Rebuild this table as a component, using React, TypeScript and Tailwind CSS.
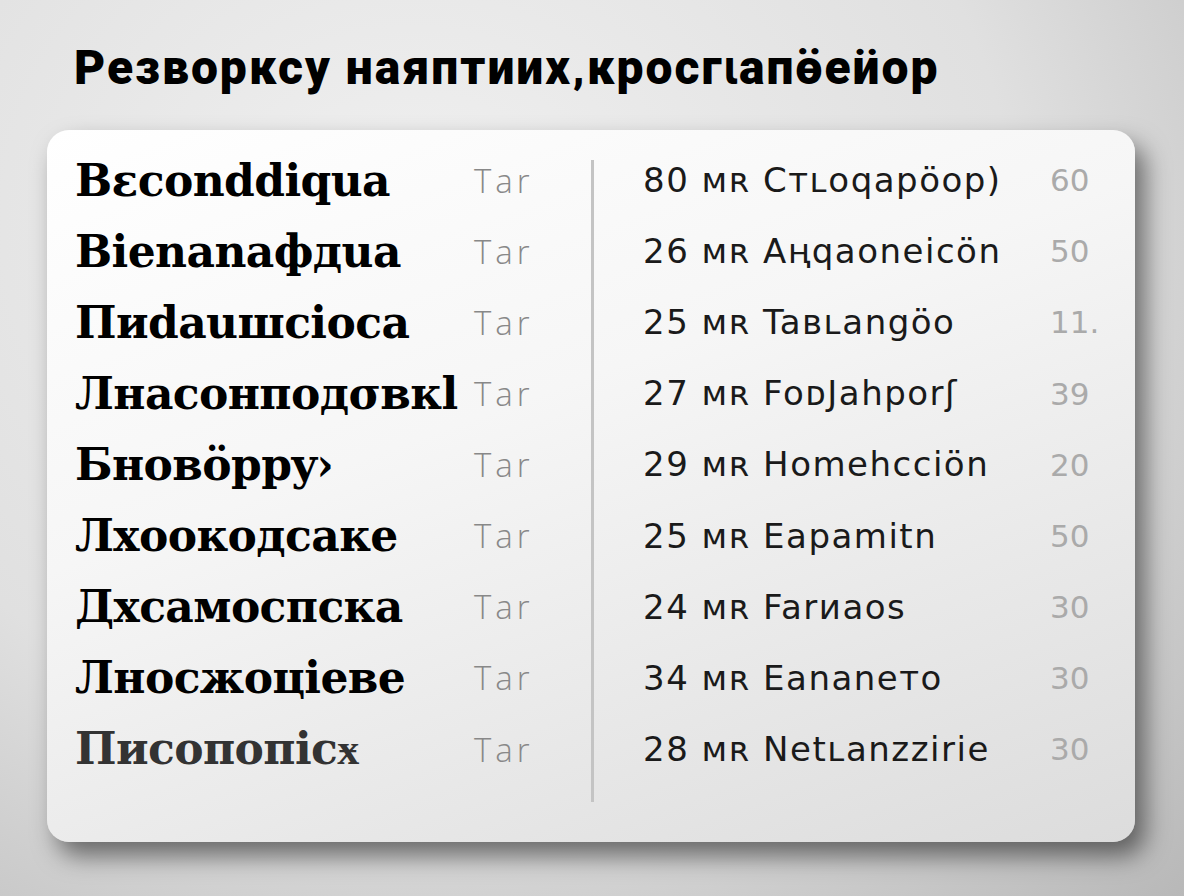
const rows = [
    { name: 'Bεconddiqua', num: '80', item: 'Cтʟoqapöop)', score: '60' },
    { name: 'Bienanaфдua', num: '26', item: 'Aңqaoneicön', score: '50' },
    { name: 'Пиdauшcioca', num: '25', item: 'Taвʟangöo', score: '11.' },
    { name: 'Лнасонподσвкl', num: '27', item: 'FoᴅJahporʃ', score: '39' },
    { name: 'Бновöppy›', num: '29', item: 'Homehcᴄiön', score: '20' },
    { name: 'Лхоокодсаке', num: '25', item: 'Eapamitn', score: '50' },
    { name: 'Дхсамоспска', num: '24', item: 'Farиaos', score: '30' },
    { name: 'Лносжоцiеве', num: '34', item: 'Eananeто', score: '30' },
    { name: 'Писопoпiсӿ', num: '28', item: 'Netʟanzzirie', score: '30' },
];

const App = () => {
    return (
        <div className="w-[1184px] h-[896px] overflow-hidden bg-[radial-gradient(ellipse_at_35%_25%,#f0f0f0_0%,#e0e0e0_55%,#b8b8b8_100%)] flex flex-col">
            {/* Title */}
            <h1 className="pl-[74px] pt-[38px] h-[130px] text-[48px] leading-[60px] font-black text-black tracking-[2px] font-['Roboto',Arial,sans-serif]">
                Резворксу наяптиих‚кросгɩапӫеӥор
            </h1>

            {/* Card */}
            <div className="ml-[47px] w-[1088px] h-[712px] rounded-[22px] bg-[linear-gradient(160deg,#ffffff_0%,#f6f6f6_40%,#dcdcdc_100%)] shadow-[10px_14px_24px_rgba(0,0,0,0.5)] flex">
                <div className="w-[544px] pl-[28px] pt-[15px] flex flex-col">
                    {rows.map((row, i) => (
                        <div key={i} className="h-[71.1px] flex items-center">
                            <span
                                className={`w-[399px] shrink-0 text-[44px] font-bold font-['DejaVu_Serif','Liberation_Serif',serif] tracking-[-0.6px] whitespace-nowrap ${i === 8 ? 'text-[#333]' : 'text-black'}`}
                            >
                                {row.name}
                            </span>
                            <span className="text-[33px] font-light tracking-[4px] text-[#888] font-['Open_Sans',sans-serif]">
                                Tar
                            </span>
                        </div>
                    ))}
                </div>

                {/* Divider */}
                <div className="w-[3px] h-[642px] mt-[30px] bg-[#c4c4c4]" />

                <div className="flex-1 pl-[49px] pt-[15px] flex flex-col">
                    {rows.map((row, i) => (
                        <div key={i} className="h-[71.1px] flex items-center font-['DejaVu_Sans',sans-serif]">
                            <span className="w-[407px] shrink-0 text-[34px] tracking-[1.5px] text-[#1a1a1a] whitespace-nowrap">
                                {row.num} мʀ {row.item}
                            </span>
                            <span className="text-[31px] text-[#aaa]">{row.score}</span>
                        </div>
                    ))}
                </div>
            </div>
        </div>
    );
};

export default App;
